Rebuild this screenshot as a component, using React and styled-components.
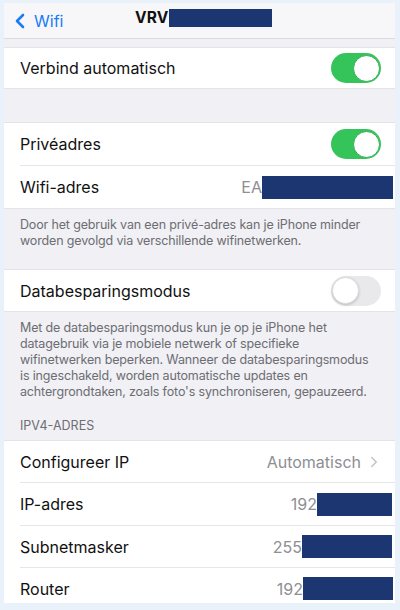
import React from 'react'
import styled, { createGlobalStyle } from 'styled-components'
import { ChevronLeft, ChevronRight } from 'lucide-react'

const Global = createGlobalStyle`
  body {
    margin: 0;
    background: #e9f2fa;
    font-family: Inter, "Noto Sans", "Liberation Sans", sans-serif;
    -webkit-font-smoothing: antialiased;
  }
`

const Frame = styled.div`
  width: 400px;
  height: 610px;
  box-sizing: border-box;
  padding: 3px 5px 7px 4px;
`

const Screen = styled.div`
  height: 100%;
  background: #f0f0f5;
  overflow: hidden;
`

const NavBar = styled.div`
  height: 35px;
  background: #f7f7f9;
  border-bottom: 1px solid #dcdce0;
  display: flex;
  align-items: center;
  position: relative;
`

const Back = styled.div`
  display: flex;
  align-items: center;
  color: #1a7cf5;
  font-size: 16px;
  padding-left: 4px;
  gap: 2px;
`

const Title = styled.div`
  position: absolute;
  left: 131px;
  top: 5px;
  display: flex;
  align-items: center;
  font-weight: 700;
  font-size: 15.5px;
  color: #111;
  letter-spacing: 0.2px;
`

const Redact = styled.span`
  display: inline-block;
  background: #1c3671;
  width: ${p => p.w}px;
  height: ${p => p.h || 23}px;
`

const Spacer = styled.div`
  height: ${p => p.h}px;
`

const Group = styled.div`
  background: #fff;
  border-top: 1px solid #e4e4e8;
  border-bottom: 1px solid #e4e4e8;
`

const Row = styled.div`
  height: ${p => p.h || 42}px;
  display: flex;
  align-items: center;
  margin-left: 16px;
  padding-right: 14px;
  box-sizing: border-box;
  & + & {
    border-top: 1px solid #e6e6ea;
  }
`

const Label = styled.div`
  flex: 1;
  font-size: 16px;
  color: #111;
`

const Value = styled.div`
  display: flex;
  align-items: center;
  font-size: 16px;
  color: #8e8e93;
  margin-right: ${p => p.mr || 0}px;
`

const Toggle = styled.div`
  width: 50px;
  height: 30px;
  border-radius: 15px;
  box-sizing: border-box;
  background: ${p => (p.on ? '#35c45a' : '#e9e9eb')};
  display: flex;
  align-items: center;
  justify-content: ${p => (p.on ? 'flex-end' : 'flex-start')};
  padding: 1px;
`

const Knob = styled.div`
  width: 27px;
  height: 27px;
  border-radius: 50%;
  background: #fff;
  box-shadow: ${p => (p.on ? 'none' : '0 1px 3px rgba(0,0,0,0.2)')};
  border: 1px solid ${p => (p.on ? '#2fb04f' : '#dcdcdc')};
  box-sizing: border-box;
`

const Footer = styled.div`
  padding: 8px 16px 0 16px;
  height: ${p => p.h}px;
  box-sizing: border-box;
  font-size: 12.5px;
  letter-spacing: -0.15px;
  line-height: 16px;
  color: #6d6d72;
`

const Header = styled.div`
  height: 29px;
  box-sizing: border-box;
  padding: 7px 16px 0;
  font-size: 12.5px;
  color: #6d6d72;
  text-transform: uppercase;
`

const App = () => {
  return (
    <Frame>
      <Global />
      <Screen>
        <NavBar>
          <Back>
            <ChevronLeft size={24} strokeWidth={2.6} />
            <span>Wifi</span>
          </Back>
          <Title>
            VRV<Redact w={103} h={18} />
          </Title>
        </NavBar>
        <Spacer h={8} />
        <Group>
          <Row h={40}>
            <Label>Verbind automatisch</Label>
            <Toggle on><Knob on /></Toggle>
          </Row>
        </Group>
        <Spacer h={33} />
        <Group>
          <Row>
            <Label>Privéadres</Label>
            <Toggle on><Knob on /></Toggle>
          </Row>
          <Row h={43}>
            <Label>Wifi-adres</Label>
            <Value mr={-12}>EA<Redact w={131} /></Value>
          </Row>
        </Group>
        <Footer h={60}>
          Door het gebruik van een privé-adres kan je iPhone minder worden gevolgd via verschillende wifinetwerken.
        </Footer>
        <Group>
          <Row h={41}>
            <Label>Databesparingsmodus</Label>
            <Toggle><Knob /></Toggle>
          </Row>
        </Group>
        <Footer h={99}>
          Met de databesparingsmodus kun je op je iPhone het datagebruik via je mobiele netwerk of specifieke wifinetwerken beperken. Wanneer de databesparingsmodus is ingeschakeld, worden automatische updates en achtergrondtaken, zoals foto's synchroniseren, gepauzeerd.
        </Footer>
        <Header>IPv4-adres</Header>
        <Group>
          <Row h={41}>
            <Label>Configureer IP</Label>
            <Value>
              Automatisch
              <ChevronRight size={18} color="#c4c4c8" strokeWidth={2} style={{ marginLeft: 4, marginRight: -2 }} />
            </Value>
          </Row>
          <Row h={43}>
            <Label>IP-adres</Label>
            <Value mr={-11}>192<Redact w={75} /></Value>
          </Row>
          <Row>
            <Label>Subnetmasker</Label>
            <Value mr={-11}>255<Redact w={90} /></Value>
          </Row>
          <Row>
            <Label>Router</Label>
            <Value mr={-12}>192<Redact w={90} /></Value>
          </Row>
        </Group>
      </Screen>
    </Frame>
  )
}

export default App
